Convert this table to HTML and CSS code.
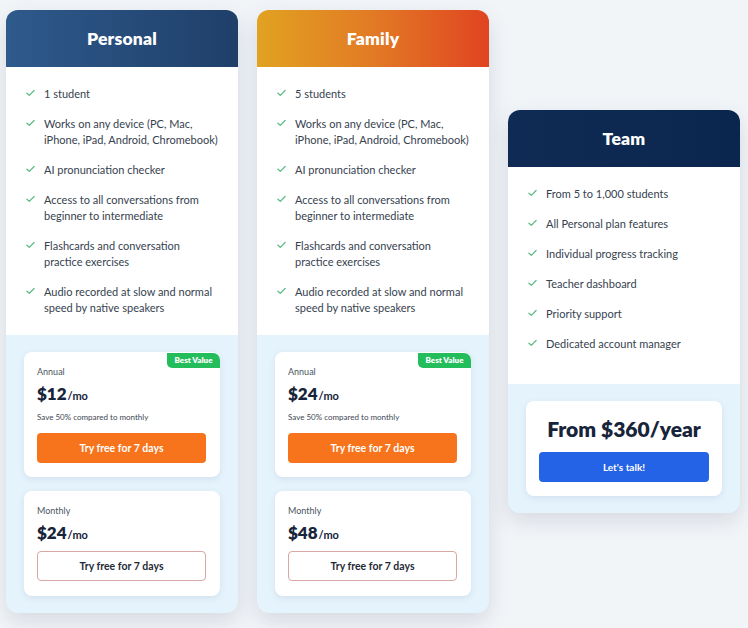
FILE: index.html
```html
<!DOCTYPE html>
<html lang="en">
<head>
<meta charset="utf-8">
<title>Pricing</title>
<link rel="stylesheet" href="styles.css">
</head>
<body>
<main class="plans">
  <section class="plan">
    <header class="plan-head head-personal"><h2>Personal</h2></header>
    <ul class="features">
      <li><svg class="check" viewBox="0 0 10 8"><path d="M1 4.2 L3.7 6.6 L9 1.2"/></svg><span>1 student</span></li>
      <li><svg class="check" viewBox="0 0 10 8"><path d="M1 4.2 L3.7 6.6 L9 1.2"/></svg><span>Works on any device (PC, Mac, iPhone, iPad, Android, Chromebook)</span></li>
      <li><svg class="check" viewBox="0 0 10 8"><path d="M1 4.2 L3.7 6.6 L9 1.2"/></svg><span>AI pronunciation checker</span></li>
      <li><svg class="check" viewBox="0 0 10 8"><path d="M1 4.2 L3.7 6.6 L9 1.2"/></svg><span>Access to all conversations from beginner to intermediate</span></li>
      <li><svg class="check" viewBox="0 0 10 8"><path d="M1 4.2 L3.7 6.6 L9 1.2"/></svg><span>Flashcards and conversation practice exercises</span></li>
      <li><svg class="check" viewBox="0 0 10 8"><path d="M1 4.2 L3.7 6.6 L9 1.2"/></svg><span>Audio recorded at slow and normal speed by native speakers</span></li>
    </ul>
    <div class="pricing">
      <div class="price-card">
        <span class="badge">Best Value</span>
        <div class="period">Annual</div>
        <div class="price">$12<span class="unit">/mo</span></div>
        <div class="note">Save 50% compared to monthly</div>
        <button class="btn btn-orange">Try free for 7 days</button>
      </div>
      <div class="price-card">
        <div class="period">Monthly</div>
        <div class="price">$24<span class="unit">/mo</span></div>
        <button class="btn btn-outline">Try free for 7 days</button>
      </div>
    </div>
  </section>

  <section class="plan">
    <header class="plan-head head-family"><h2>Family</h2></header>
    <ul class="features">
      <li><svg class="check" viewBox="0 0 10 8"><path d="M1 4.2 L3.7 6.6 L9 1.2"/></svg><span>5 students</span></li>
      <li><svg class="check" viewBox="0 0 10 8"><path d="M1 4.2 L3.7 6.6 L9 1.2"/></svg><span>Works on any device (PC, Mac, iPhone, iPad, Android, Chromebook)</span></li>
      <li><svg class="check" viewBox="0 0 10 8"><path d="M1 4.2 L3.7 6.6 L9 1.2"/></svg><span>AI pronunciation checker</span></li>
      <li><svg class="check" viewBox="0 0 10 8"><path d="M1 4.2 L3.7 6.6 L9 1.2"/></svg><span>Access to all conversations from beginner to intermediate</span></li>
      <li><svg class="check" viewBox="0 0 10 8"><path d="M1 4.2 L3.7 6.6 L9 1.2"/></svg><span>Flashcards and conversation practice exercises</span></li>
      <li><svg class="check" viewBox="0 0 10 8"><path d="M1 4.2 L3.7 6.6 L9 1.2"/></svg><span>Audio recorded at slow and normal speed by native speakers</span></li>
    </ul>
    <div class="pricing">
      <div class="price-card">
        <span class="badge">Best Value</span>
        <div class="period">Annual</div>
        <div class="price">$24<span class="unit">/mo</span></div>
        <div class="note">Save 50% compared to monthly</div>
        <button class="btn btn-orange">Try free for 7 days</button>
      </div>
      <div class="price-card">
        <div class="period">Monthly</div>
        <div class="price">$48<span class="unit">/mo</span></div>
        <button class="btn btn-outline">Try free for 7 days</button>
      </div>
    </div>
  </section>

  <section class="plan plan-team">
    <header class="plan-head head-team"><h2>Team</h2></header>
    <ul class="features features-team">
      <li><svg class="check" viewBox="0 0 10 8"><path d="M1 4.2 L3.7 6.6 L9 1.2"/></svg><span>From 5 to 1,000 students</span></li>
      <li><svg class="check" viewBox="0 0 10 8"><path d="M1 4.2 L3.7 6.6 L9 1.2"/></svg><span>All Personal plan features</span></li>
      <li><svg class="check" viewBox="0 0 10 8"><path d="M1 4.2 L3.7 6.6 L9 1.2"/></svg><span>Individual progress tracking</span></li>
      <li><svg class="check" viewBox="0 0 10 8"><path d="M1 4.2 L3.7 6.6 L9 1.2"/></svg><span>Teacher dashboard</span></li>
      <li><svg class="check" viewBox="0 0 10 8"><path d="M1 4.2 L3.7 6.6 L9 1.2"/></svg><span>Priority support</span></li>
      <li><svg class="check" viewBox="0 0 10 8"><path d="M1 4.2 L3.7 6.6 L9 1.2"/></svg><span>Dedicated account manager</span></li>
    </ul>
    <div class="pricing">
      <div class="price-card team-card">
        <div class="team-price">From $360/year</div>
        <button class="btn btn-blue">Let's talk!</button>
      </div>
    </div>
  </section>
</main>
</body>
</html>
```

FILE: styles.css
```css
* { box-sizing: border-box; }

html, body {
  margin: 0;
  padding: 0;
}

body {
  background: #f2f5f8;
  font-family: Lato, "Open Sans", sans-serif;
  color: #2f3b48;
  width: 748px;
  height: 628px;
  overflow: hidden;
}

.plans {
  display: flex;
  align-items: flex-start;
  gap: 19px;
  padding: 10px 0 0 6px;
}

.plan {
  width: 232px;
  border-radius: 12px;
  overflow: hidden;
  background: #e5f3fc;
  box-shadow: 0 8px 22px rgba(40, 60, 90, 0.14);
}

.plan-team {
  margin-top: 100px;
}

.plan-head {
  height: 57px;
  display: flex;
  align-items: center;
  justify-content: center;
}

.plan-head h2 {
  margin: 0;
  color: #fff;
  font-size: 17.5px;
  font-weight: 800;
  letter-spacing: 0.2px;
}

.head-personal { background: linear-gradient(90deg, #2e5a8c 0%, #1f3f69 100%); }
.head-family { background: linear-gradient(90deg, #e1a221 0%, #e27a25 50%, #e04421 100%); }
.head-team { background: linear-gradient(90deg, #0f2b55 0%, #0b264e 100%); }

.features {
  list-style: none;
  margin: 0;
  padding: 19px 19px 19px 20px;
  background: #fff;
  display: flex;
  flex-direction: column;
  gap: 14px;
}

.features-team {
  padding-bottom: 32px;
}

.features li {
  display: flex;
  align-items: flex-start;
  gap: 9px;
  font-size: 11px;
  line-height: 16px;
  color: #36424f;
}

.check {
  flex: none;
  width: 9px;
  height: 8px;
  margin-top: 3px;
  fill: none;
  stroke: #5dbb86;
  stroke-width: 1.4;
  stroke-linecap: round;
  stroke-linejoin: round;
}

.pricing {
  padding: 17px 18px;
  display: flex;
  flex-direction: column;
  gap: 14px;
}

.price-card {
  position: relative;
  background: #fff;
  border-radius: 8px;
  padding: 14px 14px 14px 13px;
  box-shadow: 0 2px 6px rgba(40, 70, 110, 0.10);
}

.badge {
  position: absolute;
  top: 1px;
  right: 0;
  width: 53px;
  height: 15px;
  background: #24bd5c;
  color: #fff;
  font-size: 8px;
  font-weight: 800;
  line-height: 15px;
  text-align: center;
  border-radius: 0 7px 0 5px;
}

.period {
  font-size: 9px;
  line-height: 12px;
  height: 12px;
  color: #4a5561;
}

.price {
  margin-top: 7px;
  font-size: 17px;
  line-height: 18px;
  height: 18px;
  font-weight: 800;
  color: #17243a;
}

.unit {
  font-size: 11px;
  line-height: 1;
  font-weight: 700;
  margin-left: 1px;
}

.note {
  margin-top: 8px;
  font-size: 8px;
  line-height: 12px;
  height: 12px;
  color: #3d4753;
}

.btn {
  display: block;
  width: 100%;
  height: 30px;
  margin-top: 10px;
  border-radius: 4px;
  font-family: inherit;
  font-size: 10.5px;
  font-weight: 700;
  cursor: pointer;
}

.btn-orange {
  background: #f7741c;
  border: none;
  color: #fff;
}

.btn-outline {
  margin-top: 9px;
  margin-bottom: 1px;
  background: #fff;
  border: 1px solid #d9a7a4;
  color: #1f2a36;
}

.team-card {
  padding: 16px 13px 14px 13px;
}

.team-price {
  text-align: center;
  font-size: 21px;
  line-height: 24px;
  font-weight: 800;
  color: #17243a;
}

.btn-blue {
  margin-top: 11px;
  background: #2463e6;
  border: none;
  color: #fff;
  font-size: 10px;
}
```
